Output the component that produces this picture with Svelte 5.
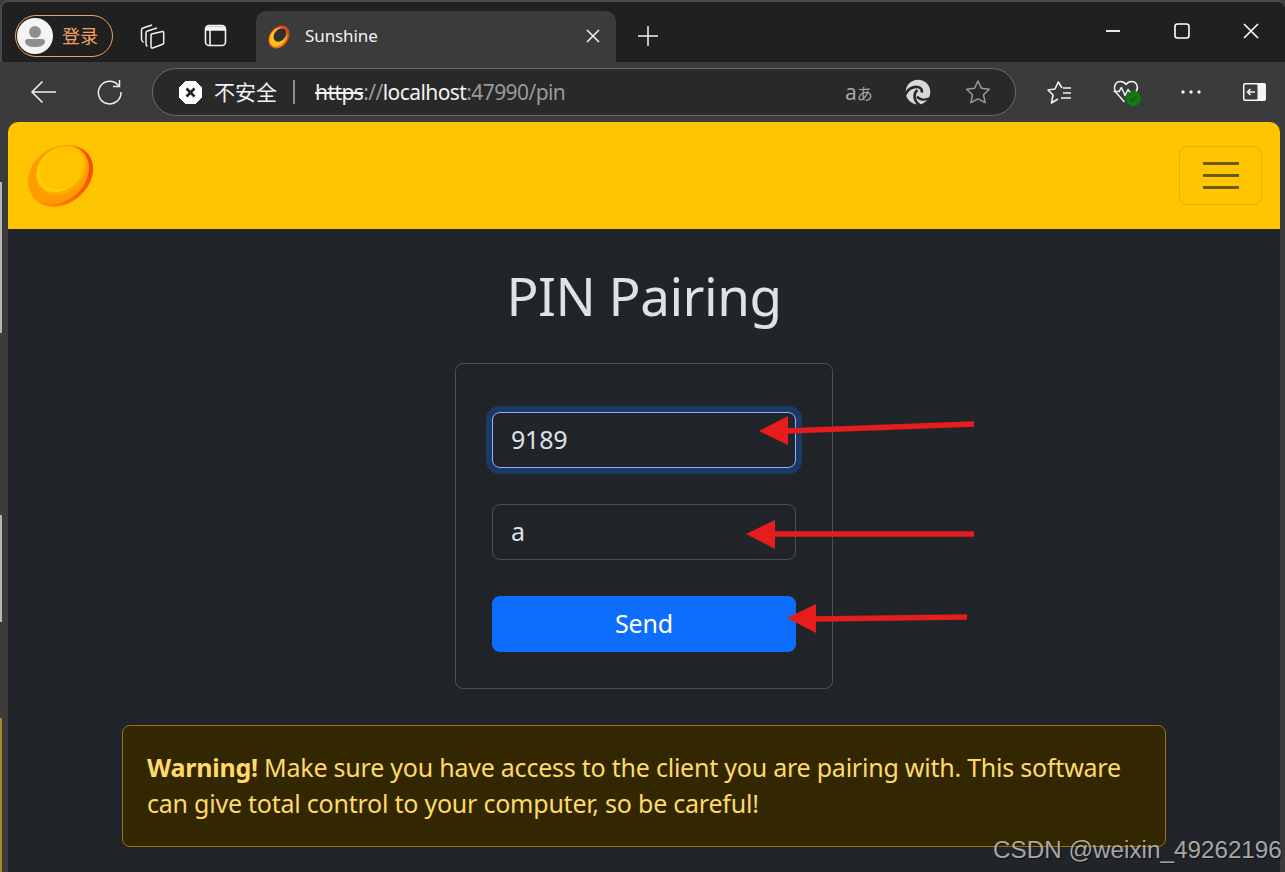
<script>
  const arrows = [
    { line: '974,424 785,431', head: '759,431 788,416 788,445' },
    { line: '974,534 772,534', head: '746,534 775,520 775,549' },
    { line: '967,617 812,619', head: '787,618 816,604 816,633' }
  ];
</script>

<div class="window">
  <header class="tabstrip">
    <div class="profile">
      <span class="avatar">
        <svg width="36" height="36" viewBox="0 0 36 36">
          <circle cx="18" cy="18" r="18" fill="#f4f4f4" />
          <circle cx="18" cy="14" r="6" fill="#8f8f8f" />
          <path d="M8 23.5c0-1.8 1.4-2.5 3-2.5h14c1.600 0 3 .7 3 2.500 0 3.500-4 5.500-10 5.500s-10-2-10-5.500z" fill="#8f8f8f" />
        </svg>
      </span>
      <span class="login">登录</span>
    </div>
    <span class="strip-icon first">
      <svg width="26" height="26" viewBox="0 0 26 26" fill="none" stroke="#f2f2f2" stroke-width="1.500" stroke-linejoin="round">
        <path d="M13 2L4 5c-1 .4-1.500 1-1.500 2v9c0 1.500.7 2.500 2 3.500" />
        <path d="M18 5L8.500 8C7.500 8.300 7 9 7 10v11c0 1 .5 1.800 1.500 2.500" />
        <path d="M12.500 11l11-2.500c.8-.1 1.200.4 1.200 1.200V20c0 .7-.3 1.100-1 1.300l-10 3.700c-1 .3-1.700-.2-1.700-1.200V12c0-.5.1-.8.5-1z" />
      </svg>
    </span>
    <span class="strip-icon second">
      <svg width="23" height="23" viewBox="0 0 23 23" fill="none" stroke="#f2f2f2" stroke-width="1.600">
        <rect x="1.500" y="1.500" width="20" height="20" rx="3.500" />
        <path d="M2 4.500h19" stroke-width="4.500" />
        <path d="M6 6v15" />
      </svg>
    </span>
    <div class="tab">
      <svg class="tab-logo" width="24" height="26" viewBox="0 0 24 26">
        <ellipse cx="12" cy="13" rx="9.500" ry="12.500" transform="rotate(35 12 13)" fill="#d9401a" />
        <ellipse cx="11.300" cy="13.600" rx="8.500" ry="11" transform="rotate(35 11.300 13.600)" fill="#f08a1a" />
        <ellipse cx="11" cy="13" rx="7.500" ry="10" transform="rotate(35 11 13)" fill="#ffc21a" />
        <ellipse cx="13" cy="11" rx="5.500" ry="7.500" transform="rotate(40 13 11)" fill="#2f2f2f" />
      </svg>
      <span class="tab-title">Sunshine</span>
      <svg class="tab-close" width="14" height="14" viewBox="0 0 14 14" stroke="#f2f2f2" stroke-width="1.500">
        <path d="M1 1l12 12M13 1L1 13" />
      </svg>
    </div>
    <svg class="new-tab" width="22" height="22" viewBox="0 0 22 22" stroke="#f2f2f2" stroke-width="1.500">
      <path d="M11 1v20M1 11h20" />
    </svg>
    <div class="caption">
      <svg width="16" height="16" viewBox="0 0 16 16" stroke="#fff" stroke-width="1.800"><path d="M1 8h14" /></svg>
      <svg width="16" height="16" viewBox="0 0 16 16" fill="none" stroke="#fff" stroke-width="1.600"><rect x="1" y="1" width="14" height="14" rx="2.500" /></svg>
      <svg width="16" height="16" viewBox="0 0 16 16" stroke="#fff" stroke-width="1.600"><path d="M1 1l14 14M15 1L1 15" /></svg>
    </div>
  </header>

  <div class="toolbar">
    <svg class="nav back" width="28" height="24" viewBox="0 0 28 24" fill="none" stroke="#f2f2f2" stroke-width="1.500">
      <path d="M2 12h24M12.500 1.500L2 12l10.500 10.500" />
    </svg>
    <svg class="nav reload" width="26" height="26" viewBox="0 0 26 26" fill="none" stroke="#f2f2f2" stroke-width="1.500">
      <path d="M21.500 6.500A11.300 11.300 0 1 0 24 13" />
      <path d="M22.500 1v6.500H16" />
    </svg>
    <div class="address">
      <svg class="warn" width="23" height="23" viewBox="0 0 23 23">
        <path d="M7 0h9l7 7v9l-7 7H7l-7-7V7z" fill="#fff" stroke="#fff" stroke-linejoin="round" />
        <path d="M7.500 7.500l8 8M15.500 7.500l-8 8" stroke="#222" stroke-width="2.600" />
      </svg>
      <span class="insecure">不安全</span>
      <span class="divider"></span>
      <span class="url"><span class="https">https</span><span class="dim">://</span>localhost<span class="dim">:47990/pin</span></span>
      <span class="translate"><span>a</span><span class="kana">あ</span></span>
      <svg class="edge" width="26" height="26" viewBox="0 0 26 26" fill="none" stroke="#292929">
        <circle cx="13" cy="13" r="12.300" fill="#d8d8d8" stroke="none" />
        <path d="M0 16C3 10 8 7.500 12.500 8c3.500.4 5 3 4 5.500" stroke-width="2.600" />
        <path d="M12.500 11c-4 3-4.500 10.500 2 15" stroke-width="2.600" />
        <path d="M12 17.500c2.500 3.500 8.500 4.500 14 1" stroke-width="2.200" />
      </svg>
      <svg class="star" width="26" height="26" viewBox="0 0 26 26" fill="none" stroke="#9a9a9a" stroke-width="1.500" stroke-linejoin="round">
        <path d="M13 2l3.400 7.300 8 1-5.900 5.500 1.600 7.900L13 19.800l-7.100 3.900 1.600-7.900L1.600 10.300l8-1z" />
      </svg>
    </div>
    <div class="tools">
      <svg width="28" height="28" viewBox="0 0 28 28" fill="none" stroke="#f2f2f2" stroke-width="1.600" stroke-linejoin="round">
        <path d="M17 10l-3.700-6L10 11l-7 1 5 5-1.500 8 6.500-4" />
        <path d="M18 10h8M18 15h8M16 20h10" />
      </svg>
      <span class="health">
        <svg width="28" height="28" viewBox="0 0 28 28" fill="none" stroke="#f2f2f2" stroke-width="1.500" stroke-linejoin="round">
          <path d="M12.500 24L4.500 15C.5 10 3 3.500 8.500 3.500c2.500 0 4.200 1.200 5.500 3 1.300-1.800 3-3 5.500-3 5.500 0 7.500 6.500 4.500 10" />
          <path d="M1.500 13.500h5.500l2.500-4 3.500 8 3-6 1.500 2.500h2" />
        </svg>
        <svg class="health-dot" width="15" height="15" viewBox="0 0 15 15">
          <circle cx="7.500" cy="7.500" r="7.500" fill="#107c10" />
          <path d="M4.500 8l2 2 4-4.500" fill="none" stroke="#0a5a0a" stroke-width="1.500" />
        </svg>
      </span>
      <svg width="24" height="6" viewBox="0 0 24 6" fill="#f2f2f2">
        <circle cx="4" cy="3" r="1.700" /><circle cx="12" cy="3" r="1.700" /><circle cx="20" cy="3" r="1.700" />
      </svg>
      <svg width="24" height="20" viewBox="0 0 24 20">
        <rect x="1" y="1" width="23" height="18" rx="2" fill="#f4f4f4" />
        <rect x="2.500" y="2.500" width="13" height="15" rx="1" fill="#3b3b3b" />
        <path d="M13 10H6M8.500 7l-3 3 3 3" fill="none" stroke="#f4f4f4" stroke-width="1.600" />
      </svg>
    </div>
  </div>

  <main class="page">
    <nav class="navbar">
      <svg class="logo" width="80" height="80" viewBox="0 0 80 80">
        <defs>
          <linearGradient id="rim" x1="0" y1="0" x2="1" y2="0.4">
            <stop offset="0" stop-color="#ffa400" />
            <stop offset="0.5" stop-color="#ff7a00" />
            <stop offset="1" stop-color="#ff4a00" />
          </linearGradient>
        </defs>
        <ellipse cx="41" cy="40" rx="35" ry="27.500" transform="rotate(-40 41 40)" fill="url(#rim)" />
        <ellipse cx="38.500" cy="38.500" rx="33" ry="26.500" transform="rotate(-40 38.500 38.500)" fill="#ff9d00" />
        <ellipse cx="41.500" cy="34" rx="28" ry="22" transform="rotate(-40 41.500 34)" fill="#ffaa00" />
        <ellipse cx="40" cy="33.500" rx="25.500" ry="20.500" transform="rotate(-40 40 33.500)" fill="#ffd000" />
        <ellipse cx="42" cy="32" rx="24.500" ry="19" transform="rotate(-40 42 32)" fill="#ffc300" />
      </svg>
      <button class="toggler" aria-label="Menu">
        <span></span><span></span><span></span>
      </button>
    </nav>

    <h1>PIN Pairing</h1>

    <form class="pin-form">
      <input class="field focused" value="9189" />
      <input class="field" value="a" />
      <button class="send" type="button">Send</button>
    </form>

    <div class="alert"><b>Warning!</b> Make sure you have access to the client you are pairing with. This software can give total control to your computer, so be careful!</div>
  </main>
</div>

<!-- screenshot leftovers: annotation arrows, watermark and the window behind -->
<svg class="annotations" width="1285" height="872">
  {#each arrows as a}
    <polyline points={a.line} stroke="#e71c1c" stroke-width="5.500" fill="none" />
    <polygon points={a.head} fill="#e71c1c" />
  {/each}
</svg>
<span class="watermark">CSDN @weixin_49262196</span>
<span class="behind one"></span>
<span class="behind two"></span>
<span class="behind gold"></span>

<style>
  :global(body) {
    margin: 0;
    background: #3b3b3b;
    overflow: hidden;
  }

  .window {
    width: 1285px;
    height: 872px;
    display: flex;
    flex-direction: column;
    font-family: "Noto Sans", "Noto Sans CJK SC", sans-serif;
    color: #f2f2f2;
    overflow: hidden;
  }

  .tabstrip {
    height: 62px;
    flex: none;
    box-sizing: border-box;
    background: #202020;
    border-top: 2px solid #4a4a4a;
    border-left: 2px solid #4a4a4a;
    border-radius: 8px 8px 0 0;
    display: flex;
    align-items: flex-end;
    padding-left: 13px;
  }

  .profile {
    width: 98px;
    height: 42px;
    box-sizing: border-box;
    border: 1.500px solid #f0a060;
    border-radius: 21px;
    display: flex;
    align-items: center;
    gap: 9px;
    padding-left: 1px;
    margin-bottom: 5px;
  }

  .avatar {
    display: flex;
  }

  .login {
    font-size: 18px;
    margin-top: -2px;
    color: #f0a060;
    font-family: "Noto Sans CJK SC", sans-serif;
  }

  .strip-icon {
    display: flex;
    margin-bottom: 13px;
  }

  .strip-icon.first {
    margin-left: 26px;
  }

  .strip-icon.second {
    margin-left: 39px;
    margin-bottom: 15px;
  }

  .tab {
    margin-left: 29px;
    width: 360px;
    height: 51px;
    box-sizing: border-box;
    background: #3b3b3b;
    border-radius: 10px 10px 0 0;
    display: flex;
    align-items: center;
    padding: 0 16px 0 11px;
  }

  .tab-title {
    margin-left: 14px;
    flex: 1;
    font-size: 17px;
    letter-spacing: -0.1px;
    margin-top: -2px;
  }

  .tab-close {
    margin-top: -2px;
  }

  .new-tab {
    margin: 0 0 15px 21px;
  }

  .caption {
    margin-left: auto;
    display: flex;
    gap: 53px;
    padding-right: 26px;
    margin-bottom: 23px;
  }

  .toolbar {
    height: 60px;
    flex: none;
    display: flex;
    align-items: center;
    background: #3b3b3b;
    padding-left: 30px;
    box-sizing: border-box;
  }

  .nav.reload {
    margin-left: 39px;
  }

  .address {
    margin-left: 29px;
    width: 864px;
    height: 48px;
    box-sizing: border-box;
    border: 1.500px solid #6a6a6a;
    border-radius: 24px;
    background: #292929;
    display: flex;
    align-items: center;
    padding-left: 26px;
  }

  .insecure {
    margin-left: 12px;
    margin-top: -2px;
    font-size: 21px;
    font-family: "Noto Sans CJK SC", sans-serif;
  }

  .divider {
    width: 2px;
    height: 24px;
    background: #8a8a8a;
    margin: 0 20px 0 16px;
  }

  .url {
    font-size: 21px;
    width: 531px;
    white-space: nowrap;
    letter-spacing: -0.58px;
  }

  .https {
    color: #f2f2f2;
    text-decoration: line-through;
  }

  .dim {
    color: #9a9a9a;
  }

  .translate {
    color: #a8a8a8;
    font-size: 21px;
    width: 40px;
    display: flex;
    align-items: baseline;
    margin-left: -1px;
  }

  .kana {
    font-size: 16px;
    font-family: "Noto Sans CJK JP", sans-serif;
  }

  .edge {
    margin-left: 20px;
  }

  .star {
    margin-left: 34px;
  }

  .tools {
    margin-left: 29px;
    display: flex;
    align-items: center;
    gap: 39px;
  }

  .health {
    position: relative;
    display: flex;
  }

  .health-dot {
    position: absolute;
    right: -1px;
    bottom: 0;
  }

  .page {
    flex: 1;
    margin: 0 5px 0 8px;
    background: #212529;
    border-radius: 10px 10px 0 0;
    overflow: hidden;
    display: flex;
    flex-direction: column;
    align-items: center;
  }

  .navbar {
    align-self: stretch;
    height: 107px;
    flex: none;
    background: #ffc500;
    display: flex;
    align-items: center;
    justify-content: space-between;
    padding: 0 18px 0 12px;
  }

  .toggler {
    width: 83px;
    height: 59px;
    box-sizing: border-box;
    background: none;
    border: 1px solid #e6b000;
    border-radius: 8px;
    display: flex;
    flex-direction: column;
    align-items: center;
    justify-content: center;
    gap: 9px;
    padding: 0;
  }

  .toggler span {
    width: 36px;
    height: 3px;
    background: #6b5a1a;
  }

  h1 {
    margin: 30px 0 0;
    font-size: 53px;
    line-height: 74px;
    font-weight: 400;
    color: #dee2e6;
    letter-spacing: -0.5px;
  }

  .pin-form {
    margin-top: 30px;
    width: 378px;
    height: 326px;
    box-sizing: border-box;
    border: 1px solid #495057;
    border-radius: 8px;
    padding: 48px 36px 0;
    display: flex;
    flex-direction: column;
    gap: 36px;
  }

  .field {
    height: 56px;
    box-sizing: border-box;
    width: 100%;
    background: #212529;
    border: 1px solid #495057;
    border-radius: 8px;
    color: #dee2e6;
    font-family: inherit;
    font-size: 25px;
    letter-spacing: -0.2px;
    padding: 0 18px 3px;
    outline: none;
  }

  .field.focused {
    border-color: #86b7fe;
    box-shadow: 0 0 0 6px #1c3a66;
  }

  .send {
    height: 56px;
    background: #0d6efd;
    border: none;
    border-radius: 8px;
    color: #fff;
    font-family: inherit;
    font-size: 25px;
    letter-spacing: -0.2px;
    padding: 0 0 3px;
  }

  .alert {
    margin-top: 36px;
    width: 1044px;
    height: 122px;
    box-sizing: border-box;
    background: #332701;
    border: 1px solid #997404;
    border-radius: 8px;
    color: #ffda6a;
    font-size: 25px;
    line-height: 36px;
    padding: 23px 24px;
    letter-spacing: -0.23px;
  }

  .alert b {
    font-weight: 700;
  }

  .annotations {
    position: absolute;
    top: 0;
    left: 0;
    pointer-events: none;
  }

  .watermark {
    position: absolute;
    left: 993px;
    top: 836px;
    font-family: "Liberation Sans", sans-serif;
    font-size: 24.250px;
    color: rgba(205, 205, 205, 0.8);
    text-shadow: 1px 1px 1px rgba(0, 0, 0, 0.5);
    white-space: nowrap;
  }

  .behind {
    position: absolute;
    left: 0;
    width: 2px;
    background: #b5b5b5;
  }

  .behind.one {
    top: 182px;
    height: 151px;
  }

  .behind.two {
    top: 515px;
    height: 107px;
  }

  .behind.gold {
    top: 718px;
    height: 154px;
    background: #a88a25;
  }
</style>
